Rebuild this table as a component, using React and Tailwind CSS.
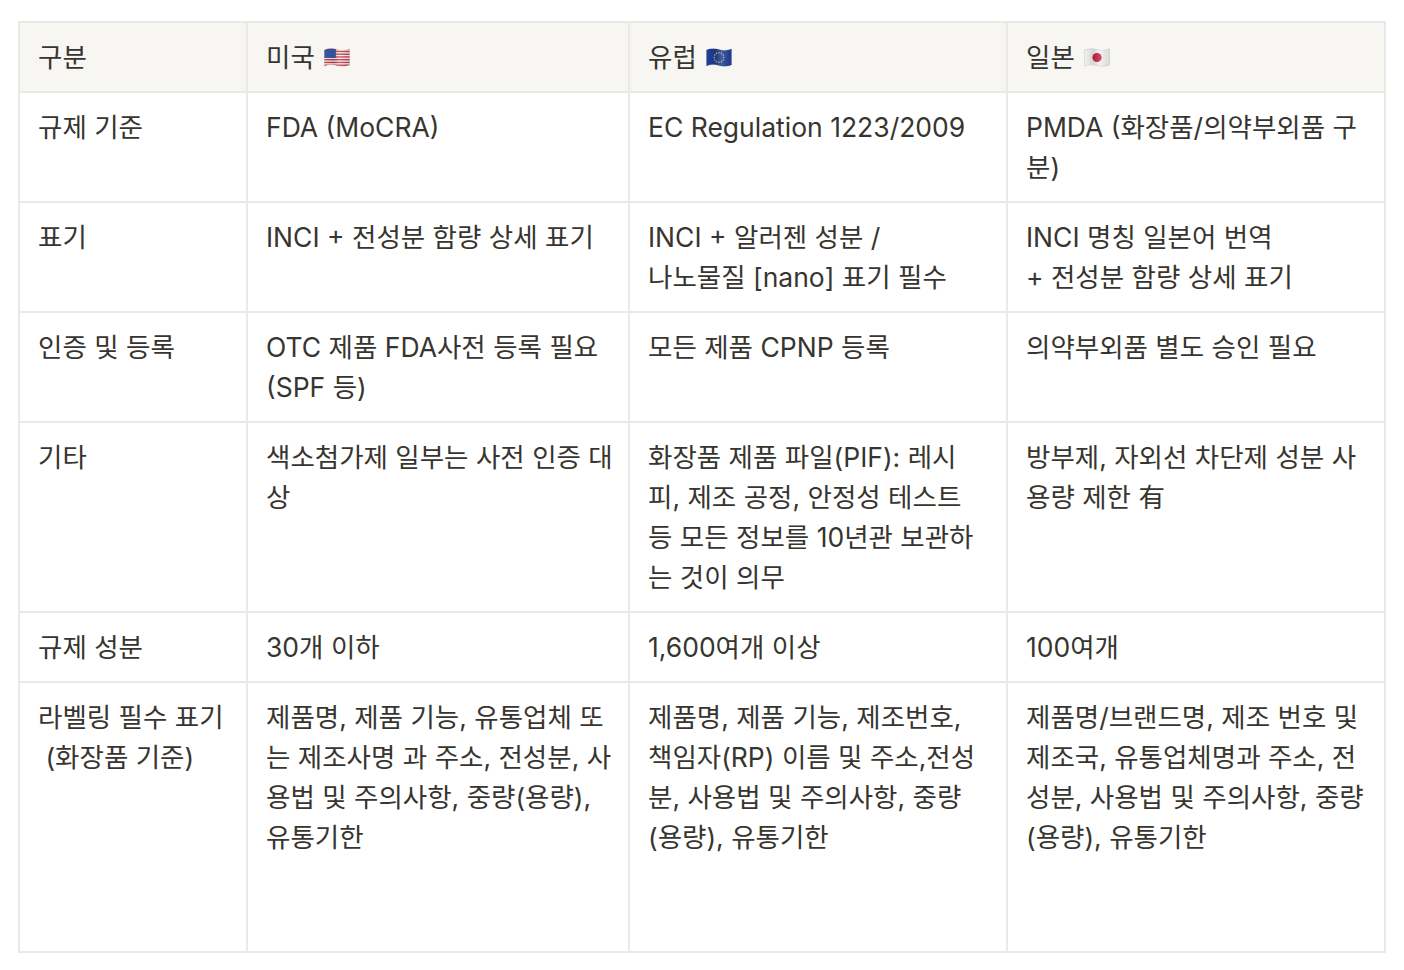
const COLS = ['w-[228px]', 'w-[382px]', 'w-[378px]', 'w-[378px]']

function Flag({ kind }) {
  const wave = 'M0.5 2.5 Q6.5 0 13 2 T25.5 1.5 V17.5 Q19.5 20 13 18 T0.5 18.5 Z'
  const id = `clip-${kind}`
  return (
    <svg width="26" height="21" viewBox="0 0 26 20" className="inline-block ml-[9px] -mt-[4px] align-middle">
      <defs>
        <clipPath id={id}><path d={wave} /></clipPath>
        <linearGradient id={`shade-${kind}`} x1="0" y1="0" x2="1" y2="0">
          <stop offset="0" stopColor="#000" stopOpacity="0" />
          <stop offset="0.35" stopColor="#000" stopOpacity="0.12" />
          <stop offset="0.6" stopColor="#fff" stopOpacity="0.15" />
          <stop offset="1" stopColor="#000" stopOpacity="0.1" />
        </linearGradient>
      </defs>
      <g clipPath={`url(#${id})`}>
        {kind === 'us' && (
          <>
            <rect x="0" y="0" width="26" height="20" fill="#f4f4f4" />
            {[0, 1, 2, 3, 4, 5, 6].map(i => (
              <rect key={i} x="0" y={0.5 + i * 2.75} width="26" height="1.4" fill="#d0364a" />
            ))}
            <rect x="0" y="0" width="12" height="10.5" fill="#3d5aa8" />
          </>
        )}
        {kind === 'eu' && (
          <>
            <rect x="0" y="0" width="26" height="20" fill="#1f3f9a" />
            {Array.from({ length: 12 }).map((_, i) => {
              const a = (i / 12) * Math.PI * 2
              return <circle key={i} cx={13 + Math.cos(a) * 4.8} cy={10 + Math.sin(a) * 4.8} r="0.75" fill="#e8c93a" />
            })}
          </>
        )}
        {kind === 'jp' && (
          <>
            <rect x="0" y="0" width="26" height="20" fill="#f3f3f3" />
            <circle cx="13" cy="10" r="4.6" fill="#c8233f" />
          </>
        )}
        <rect x="0" y="0" width="26" height="20" fill={`url(#shade-${kind})`} />
      </g>
      <path d={wave} fill="none" stroke="#00000026" strokeWidth="0.6" />
    </svg>
  )
}

const HEAD = [
  { t: '구분' },
  { t: '미국', f: 'us' },
  { t: '유럽', f: 'eu' },
  { t: '일본', f: 'jp' },
]

const ROWS = [
  [['규제 기준'], ['FDA (MoCRA)'], ['EC Regulation 1223/2009'], ['PMDA (화장품/의약부외품 구', '분)']],
  [['표기'], ['INCI + 전성분 함량 상세 표기'], ['INCI + 알러젠 성분 /', '나노물질 [nano] 표기 필수'], ['INCI 명칭 일본어 번역', '+ 전성분 함량 상세 표기']],
  [['인증 및 등록'], ['OTC 제품 FDA사전 등록 필요', '(SPF 등)'], ['모든 제품 CPNP 등록'], ['의약부외품 별도 승인 필요']],
  [['기타'], ['색소첨가제 일부는 사전 인증 대', '상'], ['화장품 제품 파일(PIF): 레시', '피, 제조 공정, 안정성 테스트', '등 모든 정보를 10년관 보관하', '는 것이 의무'], ['방부제, 자외선 차단제 성분 사', '용량 제한 有']],
  [['규제 성분'], ['30개 이하'], ['1,600여개 이상'], ['100여개']],
  [['라벨링 필수 표기', '\u00a0(화장품 기준)'], ['제품명, 제품 기능, 유통업체 또', '는 제조사명 과 주소, 전성분, 사', '용법 및 주의사항, 중량(용량),', '유통기한'], ['제품명, 제품 기능, 제조번호,', '책임자(RP) 이름 및 주소,전성', '분, 사용법 및 주의사항, 중량', '(용량), 유통기한'], ['제품명/브랜드명, 제조 번호 및', '제조국, 유통업체명과 주소, 전', '성분, 사용법 및 주의사항, 중량', '(용량), 유통기한']],
]

export default function App() {
  return (
    <div className="min-h-screen bg-white pt-[21px] pl-[18px] text-[#37352f] font-['Inter','Noto_Sans_CJK_KR',sans-serif] text-[26.5px] leading-[40px]">
      <table className="table-fixed border-collapse w-[1366px]">
        <colgroup>
          {COLS.map((c, i) => <col key={i} className={c} />)}
        </colgroup>
        <thead>
          <tr className="bg-[#f7f6f3]">
            {HEAD.map((h, i) => (
              <th key={i} className="border-2 border-[#e9e9e7] px-[18px] py-[14px] text-left font-normal align-top whitespace-nowrap">
                {h.t}{h.f && <Flag kind={h.f} />}
              </th>
            ))}
          </tr>
        </thead>
        <tbody>
          {ROWS.map((row, r) => (
            <tr key={r} className={r === ROWS.length - 1 ? 'h-[270px]' : ''}>
              {row.map((lines, c) => (
                <td key={c} className="border-2 border-[#e9e9e7] px-[18px] py-[14px] align-top whitespace-nowrap">
                  {lines.map((l, k) => <div key={k}>{l}</div>)}
                </td>
              ))}
            </tr>
          ))}
        </tbody>
      </table>
    </div>
  )
}
